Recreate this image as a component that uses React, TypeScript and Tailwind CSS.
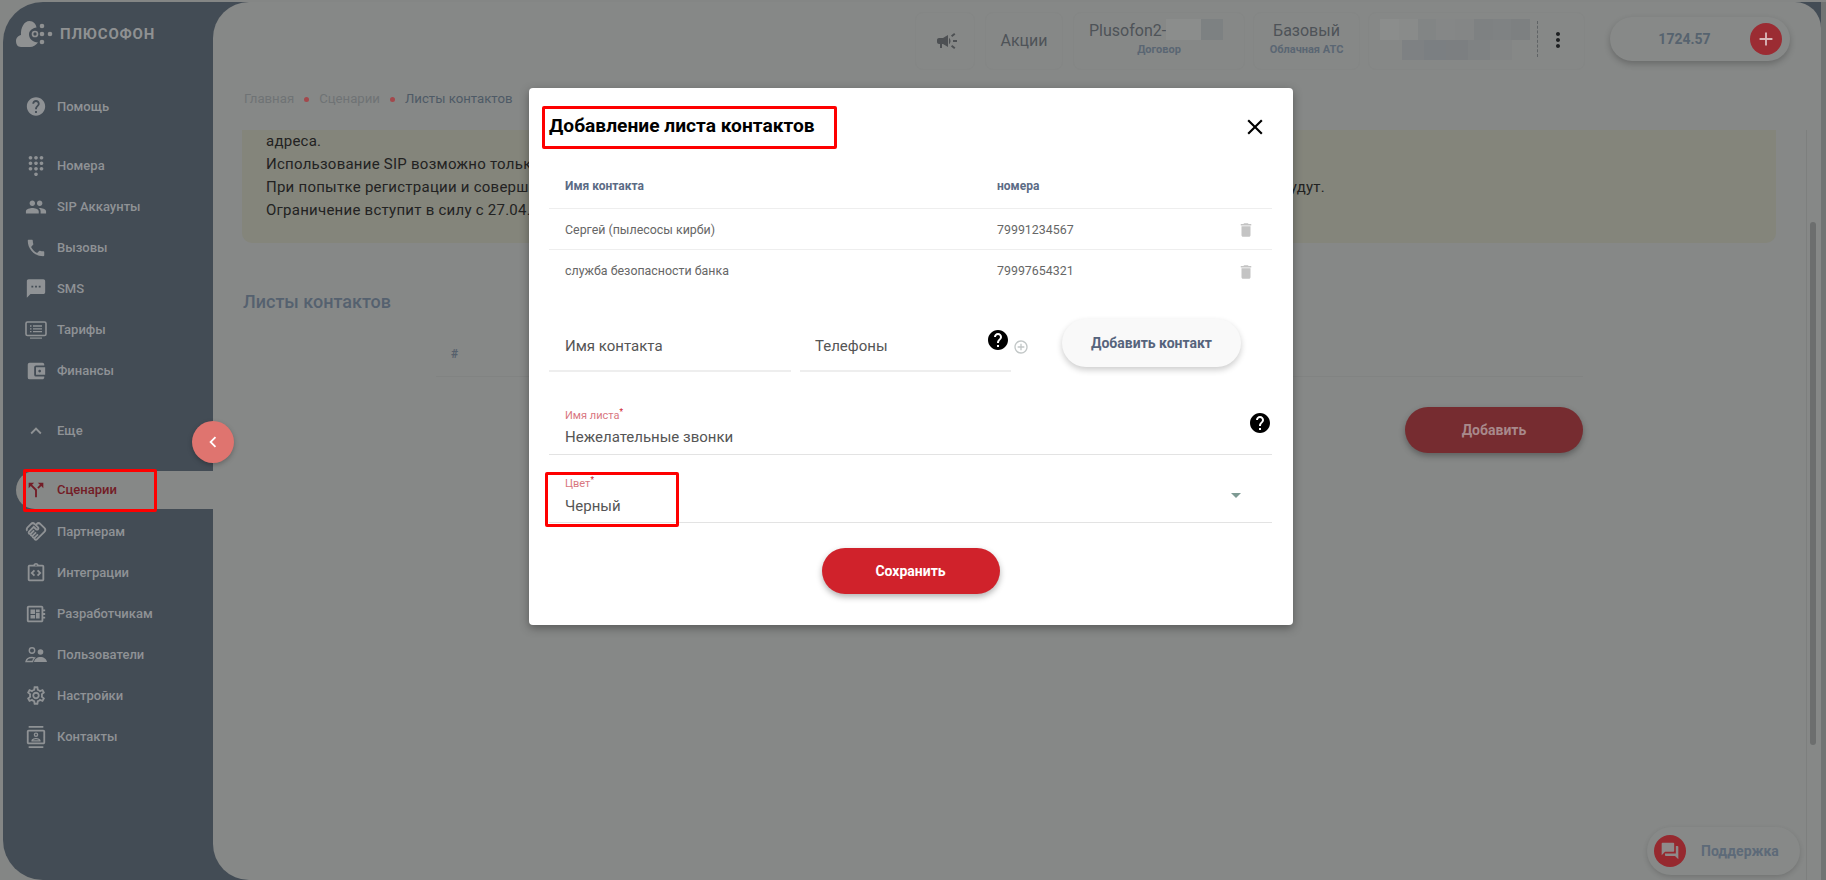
import type { ReactNode } from 'react';
import {
  MdAccountBalanceWallet,
  MdAdd,
  MdAddCircleOutline,
  MdArrowDropDown,
  MdCallSplit,
  MdCampaign,
  MdChevronLeft,
  MdClose,
  MdDelete,
  MdDialpad,
  MdExpandLess,
  MdHelp,
  MdMoreVert,
  MdOutlineContacts,
  MdOutlineDeveloperBoard,
  MdOutlineHandshake,
  MdOutlineIntegrationInstructions,
  MdOutlineSettings,
  MdPeople,
  MdPhone,
  MdQuestionAnswer,
  MdSms,
} from 'react-icons/md';

function Logo() {
  return (
    <svg width="40" height="30" viewBox="0 0 40 30" fill="none" aria-hidden>
      <path
        d="M7 28C3.5 28 2 25 2 22c0-3.5 2.5-5.5 5-6C6.5 9 10 2 15.5 2c4 0 6.5 3 7 6.5C18.5 9 15 11.5 15 15.5c0 4.5 4 7.5 9 8-2 2.500-5 4.500-8 4.500H7Z"
        fill="#8f9192"
      />
      <circle cx="21" cy="15" r="2.500" stroke="#8f9192" strokeWidth="1.700" />
      <circle cx="28" cy="7" r="2.300" fill="#8f9192" />
      <circle cx="28" cy="15" r="2.300" fill="#8f9192" />
      <circle cx="28" cy="23" r="2.300" fill="#8f9192" />
      <circle cx="36" cy="15" r="2.300" fill="#8f9192" />
    </svg>
  );
}

function TariffIcon({ size = 22 }: { size?: number }) {
  return (
    <svg width={size} height={size} viewBox="0 0 22 22" fill="none" aria-hidden>
      <rect x="1" y="3" width="20" height="13.5" rx="1.5" stroke="currentColor" strokeWidth="1.6" />
      <path d="M5 7h1.5M8 7h9M5 9.8h1.5M8 9.8h9M5 12.6h1.5M8 12.6h9" stroke="currentColor" strokeWidth="1.3" />
      <path d="M5 18.5h12v1.2H5z" fill="currentColor" />
    </svg>
  );
}

function UsersIcon() {
  return (
    <svg width="22" height="22" viewBox="0 0 22 22" fill="none" aria-hidden>
      <circle cx="7" cy="6.500" r="2.700" stroke="currentColor" strokeWidth="1.400" />
      <circle cx="15.500" cy="8" r="2.800" fill="currentColor" />
      <path d="M1 17.500c.6-2.600 3-4 6-4 1 0 1.800.2 2.500.4-1 .8-1.600 2-1.900 3.600H1Z" stroke="currentColor" strokeWidth="1.300" />
      <path d="M9 18c.4-3 3.200-5 6.500-5s6 2 6.500 5H9Z" fill="currentColor" />
    </svg>
  );
}

function NavItem({ icon, label, active }: { icon: ReactNode; label: string; active?: boolean }) {
  return (
    <div
      className={
        active
          ? 'ml-[13px] flex h-[38px] items-center gap-[10px] rounded-l-full bg-[#868887] pl-[9px] text-[13px] font-medium text-[#731c26]'
          : 'ml-[13px] flex h-[41px] items-center gap-[10px] pl-[9px] text-[13px] font-medium text-[#8f9295]'
      }
    >
      <span className="flex w-[22px] justify-center">{icon}</span>
      {label}
    </div>
  );
}

function Sidebar() {
  return (
    <aside className="flex w-[210px] flex-none flex-col">
      <div className="flex h-[84px] items-start gap-[6px] pl-[11px] pt-[17px]">
        <Logo />
        <span className="mt-[4px] text-[15px] font-bold tracking-[0.8px] text-[#8f9192]">ПЛЮСОФОН</span>
      </div>
      <NavItem icon={<MdHelp size={23} />} label="Помощь" />
      <div className="mt-[18px]">
        <NavItem icon={<MdDialpad size={22} />} label="Номера" />
        <NavItem icon={<MdPeople size={24} />} label="SIP Аккаунты" />
        <NavItem icon={<MdPhone size={24} />} label="Вызовы" />
        <NavItem icon={<MdSms size={23} />} label="SMS" />
        <NavItem icon={<TariffIcon />} label="Тарифы" />
        <NavItem icon={<MdAccountBalanceWallet size={22} />} label="Финансы" />
      </div>
      <div className="mt-[19px]">
        <NavItem icon={<MdExpandLess size={22} />} label="Еще" />
      </div>
      <div className="mt-[20px]">
        <NavItem active icon={<MdCallSplit size={22} />} label="Сценарии" />
      </div>
      <div className="mt-[2px]">
        <NavItem icon={<MdOutlineHandshake size={23} />} label="Партнерам" />
        <NavItem icon={<MdOutlineIntegrationInstructions size={22} />} label="Интеграции" />
        <NavItem icon={<MdOutlineDeveloperBoard size={22} />} label="Разработчикам" />
        <NavItem icon={<UsersIcon />} label="Пользователи" />
        <NavItem icon={<MdOutlineSettings size={23} />} label="Настройки" />
        <NavItem icon={<MdOutlineContacts size={22} />} label="Контакты" />
      </div>
    </aside>
  );
}

function HeaderBox({ width, children }: { width: string; children: ReactNode }) {
  return (
    <div className={`${width} h-[58px] flex-none rounded-[8px] border border-[#848685]`}>{children}</div>
  );
}

const mosaicTop = ['#8b8d8c', '#898b8a', '#828585', '#858787', '#848686', '#7e8182', '#7f8283', '#7d8081'];
const mosaicBottom = ['#7e8183', '#7b7f82', '#7c7f81', '#7f8283', '#838585'];

function Header() {
  return (
    <header className="flex items-start justify-end pr-[31px] pt-[10px]">
      <HeaderBox width="w-[60px]">
        <div className="flex h-full items-center justify-center pl-[4px] text-[#4d5053]">
          <MdCampaign size={24} />
        </div>
      </HeaderBox>
      <div className="ml-[10px]">
        <HeaderBox width="w-[78px]">
          <div className="flex h-full items-center justify-center text-[16px] text-[#4e5358]">Акции</div>
        </HeaderBox>
      </div>
      <div className="ml-[10px]">
        <HeaderBox width="w-[172px]">
          <div className="flex pl-[15px] pt-[6px]">
            <span className="text-[16px] leading-[24px] text-[#4e5358]">Plusofon2-</span>
            <div className="flex h-[21px] w-[57px]">
              <div className="w-[35px] bg-[#8b8d8c]" />
              <div className="w-[22px] bg-[#7d8182]" />
            </div>
          </div>
          <p className="text-center text-[11px] font-bold leading-[14px] text-[#5a6673]">Договор</p>
        </HeaderBox>
      </div>
      <div className="ml-[8px]">
        <HeaderBox width="w-[107px]">
          <p className="pt-[6px] text-center text-[16px] leading-[24px] text-[#4e5358]">Базовый</p>
          <p className="text-center text-[11px] font-bold leading-[14px] text-[#5a6673]">Облачная АТС</p>
        </HeaderBox>
      </div>
      <div className="ml-[8px]">
        <HeaderBox width="w-[217px]">
          <div className="flex h-full">
            <div className="ml-[11px] mt-[6px] w-[150px]">
              <div className="flex h-[21px]">
                {mosaicTop.map((c, i) => (
                  <div key={i} className="flex-1" style={{ background: c }} />
                ))}
              </div>
              <div className="ml-[22px] flex h-[20px] w-[110px]">
                {mosaicBottom.map((c, i) => (
                  <div key={i} className="flex-1" style={{ background: c }} />
                ))}
              </div>
            </div>
            <div className="ml-[7px] mt-[8px] h-[36px] border-l border-dashed border-[#5f6365]" />
            <div className="ml-[8px] mt-[15px] text-[#1e2022]">
              <MdMoreVert size={24} />
            </div>
          </div>
        </HeaderBox>
      </div>
      <div className="ml-[25px] mt-[5px] flex h-[44px] w-[180px] flex-none items-center rounded-full bg-[#878988] pr-[8px] shadow-[0_3px_6px_rgba(0,0,0,0.22)]">
        <span className="flex-1 pl-[9px] text-center text-[14px] font-bold text-[#56636f]">1724.57</span>
        <span className="flex h-[32px] w-[32px] items-center justify-center rounded-full bg-[#9b2c33] text-[#d9b8ba]">
          <MdAdd size={22} />
        </span>
      </div>
    </header>
  );
}

function Breadcrumbs() {
  return (
    <nav className="ml-[31px] mt-[19px] flex h-[20px] items-center text-[13.2px] text-[#6f7375]">
      <span>Главная</span>
      <span className="mx-[10px] h-[5px] w-[5px] rounded-full bg-[#a3484c]" />
      <span>Сценарии</span>
      <span className="mx-[10px] h-[5px] w-[5px] rounded-full bg-[#a3484c]" />
      <span className="text-[#4e5a66]">Листы контактов</span>
    </nav>
  );
}

function Banner() {
  return (
    <section className="ml-[29px] mt-[21px] h-[113px] w-[1534px] rounded-b-[10px] bg-[#84857b] pl-[24px] text-[15px] leading-[23px] tracking-[0.25px] text-[#222]">
      <p>адреса.</p>
      <p>Использование SIP возможно только с указанных IP-адресов.</p>
      <p className="flex w-[1059px] justify-between">
        <span>При попытке регистрации и совершении вызовов</span>
        <span>с других адресов вызовы выполняться не будут.</span>
      </p>
      <p>Ограничение вступит в силу с 27.04.2025.</p>
    </section>
  );
}

function Content() {
  return (
    <div className="ml-[30px] w-[1340px]">
      <h2 className="mt-[47px] h-[24px] text-[18px] font-medium leading-[24px] text-[#55616f]">Листы контактов</h2>
      <div className="ml-[193px] mt-[17px] flex h-[46px] items-center border-b border-[#818382] pl-[15px] text-[12px] font-bold text-[#56606c]">
        #
      </div>
      <div className="mt-[30px] flex justify-end">
        <button className="h-[46px] w-[178px] rounded-full bg-[#762c30] text-[14px] font-bold text-[#a8898b] shadow-[0_3px_6px_rgba(0,0,0,0.3)]">
          Добавить
        </button>
      </div>
    </div>
  );
}

const contacts = [
  { name: 'Сергей (пылесосы кирби)', phone: '79991234567' },
  { name: 'служба безопасности банка', phone: '79997654321' },
];

function ContactRow({ name, phone }: { name: string; phone: string }) {
  return (
    <div className="flex h-[41px] items-center pt-[2px] text-[12.4px] text-[#666]">
      <span className="w-[448px] pl-[16px]">{name}</span>
      <span className="flex-1">{phone}</span>
      <span className="mr-[17px] text-[#c4c4c4]">
        <MdDelete size={18} />
      </span>
    </div>
  );
}

function ContactListModal() {
  return (
    <div className="absolute left-[529px] top-[88px] h-[537px] w-[764px] rounded-[4px] bg-white pl-[20px] pr-[21px] shadow-[0_3px_10px_rgba(0,0,0,0.35)]">
      <div className="flex h-[77px] items-start justify-between pt-[26px]">
        <h3 className="text-[19.2px] font-bold leading-[24px] text-black">Добавление листа контактов</h3>
        <span className="mr-[4px] text-black">
          <MdClose size={26} />
        </span>
      </div>

      <div className="flex h-[44px] items-center border-b border-[#eeeeee] pb-[2px] text-[12px] font-bold text-[#5b6b85]">
        <span className="w-[448px] pl-[16px]">Имя контакта</span>
        <span>номера</span>
      </div>
      <div className="divide-y divide-[#eeeeee]">
        {contacts.map((c) => (
          <ContactRow key={c.phone} name={c.name} phone={c.phone} />
        ))}
      </div>

      <div className="mt-[28px] flex items-start">
        <div className="flex h-[53px] w-[242px] items-end border-b-2 border-[#eeeeee] pb-[12px] pl-[16px] text-[15px] leading-[24px] text-[#555]">
          Имя контакта
        </div>
        <div className="ml-[9px] flex h-[53px] w-[211px] items-end justify-between border-b-2 border-[#eeeeee] pb-[12px] pl-[15px] pr-[1px] text-[15px] leading-[24px] text-[#555]">
          Телефоны
          <span className="mb-[6px] text-black">
            <MdHelp size={24} />
          </span>
        </div>
        <span className="ml-[2px] mt-[20px] text-[#c2c7c7]">
          <MdAddCircleOutline size={16} />
        </span>
        <button className="ml-[33px] h-[48px] w-[179px] rounded-full bg-[#f9f9f9] text-[14px] font-bold text-[#56647c] shadow-[0_3px_6px_rgba(0,0,0,0.2)]">
          Добавить контакт
        </button>
      </div>

      <div className="mt-[34px] flex justify-between border-b border-[#e3e3e3] pb-[5px] pl-[16px] pt-[3px]">
        <div>
          <p className="text-[11px] leading-[14px] text-[#d9777f]">
            Имя листа<sup className="text-[#d0222b]">*</sup>
          </p>
          <p className="mt-[2px] text-[15px] leading-[24px] text-[#555]">Нежелательные звонки</p>
        </div>
        <span className="mt-[2px] text-black">
          <MdHelp size={24} />
        </span>
      </div>

      <div className="flex justify-between border-b border-[#e3e3e3] pb-[4px] pl-[16px] pt-[22px]">
        <div>
          <p className="text-[11px] leading-[14px] text-[#d9777f]">
            Цвет<sup className="text-[#d0222b]">*</sup>
          </p>
          <p className="mt-[3px] text-[15px] leading-[24px] text-[#555]">Черный</p>
        </div>
        <span className="mr-[24px] mt-[6px] text-[#7e9a93]">
          <MdArrowDropDown size={24} />
        </span>
      </div>

      <div className="mt-[25px] flex justify-center">
        <button className="h-[46px] w-[178px] rounded-full bg-[#d0222b] text-[14px] font-bold text-white shadow-[0_3px_6px_rgba(0,0,0,0.3)]">
          Сохранить
        </button>
      </div>
    </div>
  );
}

export default function App() {
  return (
    <div className="relative flex h-[880px] w-[1826px] overflow-hidden bg-[#848685] pl-[3px] pt-[2px] [font-family:Roboto,sans-serif]">
      <div className="flex min-w-0 flex-1 rounded-l-[40px] bg-[#434c55]">
        <Sidebar />
        <main className="flex min-w-0 flex-1 flex-col rounded-l-[36px] rounded-tr-[26px] bg-[#868887]">
          <Header />
          <Breadcrumbs />
          <Banner />
          <Content />
        </main>
      </div>
      <div className="w-[5px] flex-none bg-[#717473]" />

      {/* page scrollbar */}
      <div className="absolute bottom-0 left-[1806px] top-[130px] w-px bg-[#7d7f7e]" />
      <div className="absolute left-[1810px] top-[222px] h-[523px] w-[6px] rounded-full bg-[#6c6e6e]" />

      {/* sidebar collapse button */}
      <button className="absolute left-[192px] top-[421px] flex h-[42px] w-[42px] items-center justify-center rounded-full bg-[#df746f] text-white shadow-[0_2px_5px_rgba(0,0,0,0.25)]">
        <MdChevronLeft size={22} />
      </button>

      {/* support chat */}
      <div className="absolute left-[1647px] top-[827px] flex h-[48px] w-[153px] items-center rounded-full bg-[#878988] pl-[7px] shadow-[0_2px_5px_rgba(0,0,0,0.15)]">
        <span className="flex h-[32px] w-[32px] items-center justify-center rounded-full bg-[#96292f] text-[#8f8a8a]">
          <MdQuestionAnswer size={20} />
        </span>
        <span className="ml-[15px] text-[14px] font-bold text-[#5d6a78]">Поддержка</span>
      </div>

      <ContactListModal />

      {/* red annotation frames from the screenshot */}
      <div className="absolute left-[23px] top-[469px] h-[43px] w-[134px] rounded-[2px] border-[3px] border-[#fe0000]" />
      <div className="absolute left-[542px] top-[106px] h-[43px] w-[295px] rounded-[2px] border-[3px] border-[#fe0000]" />
      <div className="absolute left-[545px] top-[472px] h-[55px] w-[134px] rounded-[2px] border-[3px] border-[#fe0000]" />
    </div>
  );
}
